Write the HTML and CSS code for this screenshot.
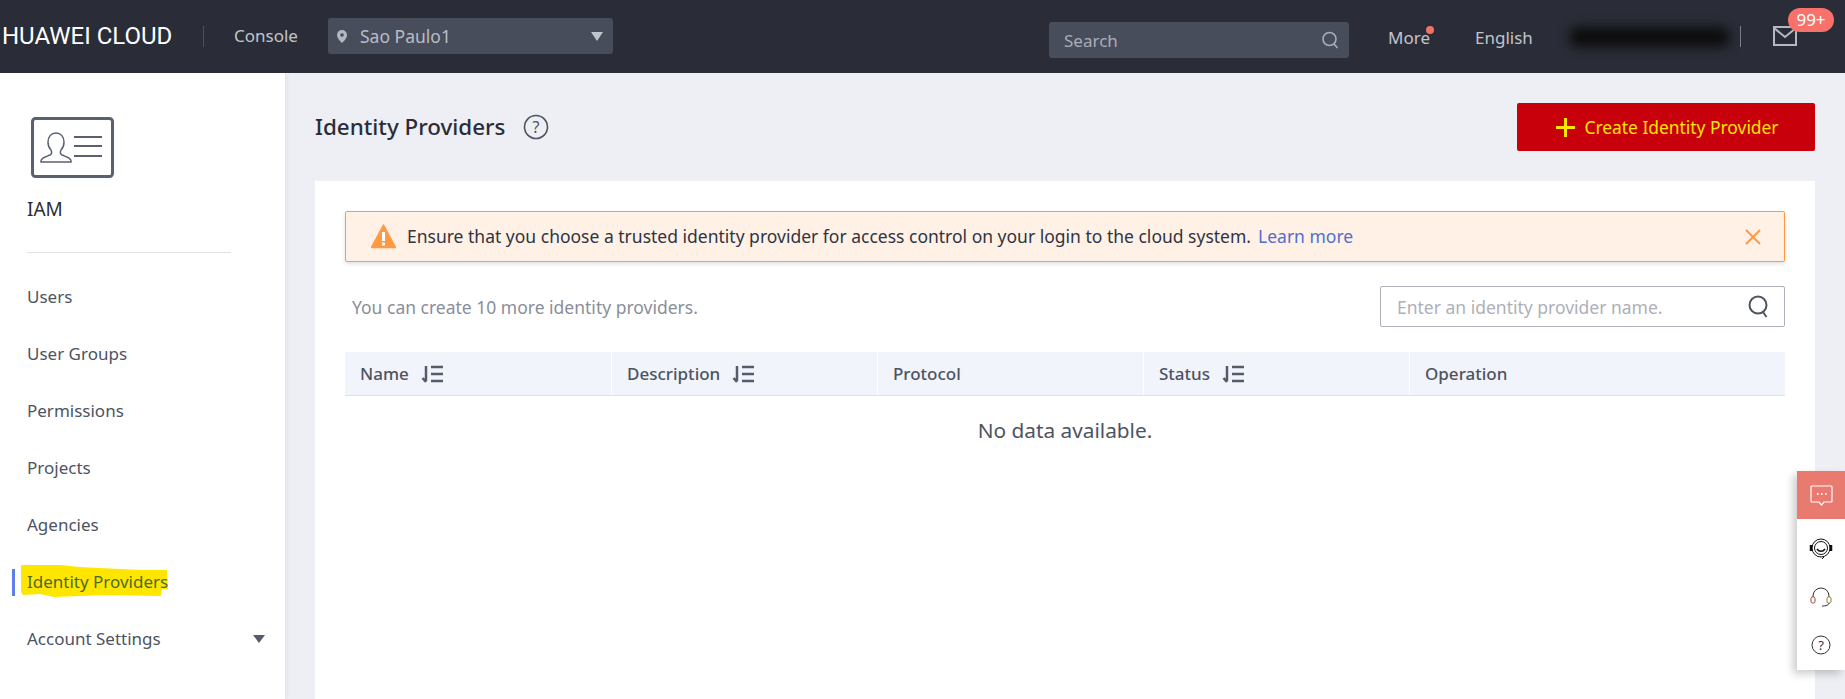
FILE: index.html
```html
<!DOCTYPE html>
<html>
    <head lang="en">
        <meta charset="UTF-8">
        <title>Identity Providers</title>
        <link rel="stylesheet" href="styles.css">
    </head>
    <body>
        <div class="header">
            <span class="logo">HUAWEI CLOUD</span>
            <span class="logo-line"></span>
            <span class="console">Console</span>
            <div class="region">
                <svg class="pin" width="10" height="13" viewBox="0 0 10 13"><path d="M5 0a5 5 0 0 1 5 5c0 3-3 6-5 8-2-2-5-5-5-8a5 5 0 0 1 5-5z" fill="#b4b8c2"/><circle cx="5" cy="5" r="1.8" fill="#484d5b"/></svg>
                <span class="region-name">Sao Paulo1</span>
                <span class="region-arrow"></span>
            </div>
            <div class="search">
                <span>Search</span>
                <svg width="18" height="18" viewBox="0 0 18 18" fill="none" stroke="#a9adb7" stroke-width="1.6"><circle cx="8.5" cy="8" r="6.5"/><path d="M13 13l3.5 4"/></svg>
            </div>
            <span class="nav-item nav-more">More<i class="dot"></i></span>
            <span class="nav-item nav-lang">English</span>
            <div class="scribble"></div>
            <span class="nav-line"></span>
            <div class="mail">
                <svg width="24" height="20" viewBox="0 0 24 20" fill="none" stroke="#b4b8c2" stroke-width="2"><rect x="1" y="1" width="22" height="18"/><path d="M1 2l11 9 11-9"/></svg>
                <span class="badge">99+</span>
            </div>
        </div>
        <div class="page">
            <div class="sidebar">
                <svg class="iam-icon" width="83" height="61" viewBox="0 0 83 61" fill="none" stroke="#5b6070">
                    <rect x="1.5" y="1.5" width="80" height="58" rx="3" stroke-width="3"/>
                    <path d="M10 44c0-3 4-4 9-6 2-1 2-3 1-5-2-2-3-5-3-8 0-5 3-9 8-9s8 4 8 9c0 3-1 6-3 8-1 2-1 4 1 5 5 2 9 3 9 6v1H10z" stroke-width="1.5"/>
                    <path d="M43 20h28M43 29h28M43 39h28" stroke-width="2"/>
                </svg>
                <div class="iam-title">IAM</div>
                <div class="side-line"></div>
                <ul class="menu">
                    <li>Users</li>
                    <li>User Groups</li>
                    <li>Permissions</li>
                    <li>Projects</li>
                    <li>Agencies</li>
                    <li class="selected">
                        <svg class="marker" width="156" height="34" viewBox="0 0 156 34"><path d="M2 1l40 0 18 2 62 3 26 0 1 19-6 0-1 7-55-1-52 2-14-3-17 1-2-3z" fill="#ffe600"/></svg>
                        <span>Identity Providers</span>
                    </li>
                    <li class="has-sub">Account Settings<span class="sub-arrow"></span></li>
                </ul>
            </div>
            <div class="main">
                <div class="title-row">
                    <h1>Identity Providers</h1>
                    <svg class="help" width="26" height="26" viewBox="0 0 26 26"><circle cx="13" cy="13" r="11.5" fill="none" stroke="#4e5362" stroke-width="1.6"/><text x="13" y="18.5" text-anchor="middle" class="help-mark">?</text></svg>
                    <button class="create"><span class="plus"></span>Create Identity Provider</button>
                </div>
                <div class="card">
                    <div class="alert">
                        <svg class="warn" width="25" height="25" viewBox="0 0 25 25"><path d="M12.5 1L24.500 23.500H.5z" fill="#ff9a42" stroke="#ff9a42" stroke-width="1.500" stroke-linejoin="round"/><rect x="11" y="8" width="3" height="9" fill="#fff"/><rect x="11" y="18.500" width="3" height="3" fill="#fff"/></svg>
                        <span class="alert-text">Ensure that you choose a trusted identity provider for access control on your login to the cloud system.<a class="learn">Learn more</a></span>
                        <svg class="close" width="16" height="16" viewBox="0 0 16 16" stroke="#ff9a42" stroke-width="2"><path d="M1 1l14 14M15 1L1 15"/></svg>
                    </div>
                    <div class="tools">
                        <span class="quota">You can create 10 more identity providers.</span>
                        <div class="filter">
                            <span>Enter an identity provider name.</span>
                            <svg width="23" height="23" viewBox="0 0 23 23" fill="none" stroke="#4e5362" stroke-width="2"><circle cx="11" cy="10" r="8.500"/><path d="M16 17l3.500 5"/></svg>
                        </div>
                    </div>
                    <div class="thead">
                        <div class="th">Name<svg class="sort" width="23" height="18" viewBox="0 0 23 18" fill="none" stroke="#565b6b" stroke-width="2.500"><path d="M5 1v15M1.500 13L5 17M10 2h12M10 9h12M10 16h12"/></svg></div>
                        <div class="th">Description<svg class="sort" width="23" height="18" viewBox="0 0 23 18" fill="none" stroke="#565b6b" stroke-width="2.500"><path d="M5 1v15M1.500 13L5 17M10 2h12M10 9h12M10 16h12"/></svg></div>
                        <div class="th">Protocol</div>
                        <div class="th">Status<svg class="sort" width="23" height="18" viewBox="0 0 23 18" fill="none" stroke="#565b6b" stroke-width="2.500"><path d="M5 1v15M1.500 13L5 17M10 2h12M10 9h12M10 16h12"/></svg></div>
                        <div class="th">Operation</div>
                    </div>
                    <div class="empty">No data available.</div>
                </div>
            </div>
        </div>
        <div class="float-bar">
            <div class="float-top">
                <svg width="23" height="21" viewBox="0 0 23 21" fill="none" stroke="#fff" stroke-width="1.200"><path d="M2 1h19a1 1 0 0 1 1 1v14a1 1 0 0 1-1 1h-7l-2.500 3L9 17H2a1 1 0 0 1-1-1V2a1 1 0 0 1 1-1z"/><path d="M7 9h1.500M11 9h1.500M15 9h1.500" stroke-width="1.800"/></svg>
            </div>
            <div class="float-item">
                <svg width="26" height="22" viewBox="0 0 26 22" fill="none" stroke="#111" stroke-width="1"><circle cx="13" cy="10" r="9"/><circle cx="13" cy="10" r="6.500"/><path d="M9 11c2 3 6 3 8 0" stroke-width="1.600"/><path d="M3 7v6M23 7v6" stroke-width="2.500"/><path d="M16 19l-2 2"/></svg>
            </div>
            <div class="float-item">
                <svg width="22" height="21" viewBox="0 0 22 21" fill="none" stroke-width="1"><path d="M3 10V9a8 8 0 0 1 16 0v1" stroke="#333"/><rect x="1" y="10" width="4" height="6" rx="1.500" stroke="#a04030"/><rect x="17" y="10" width="4" height="6" rx="1.500" stroke="#8a7a30"/><path d="M19 16c0 2-3 3-7 3" stroke="#333"/></svg>
            </div>
            <div class="float-item">
                <svg width="20" height="20" viewBox="0 0 20 20"><circle cx="10" cy="10" r="9" fill="none" stroke="#333" stroke-width="1"/><text x="10" y="14.500" text-anchor="middle" class="float-mark">?</text></svg>
            </div>
        </div>
    </body>
</html>
```
FILE: styles.css
```css
*{
    margin:0;
    padding:0;
    box-sizing:border-box;
}
ul,ol{
    list-style:none;
}
html,body{
    height:699px;
    overflow:hidden;
}
body{
    font-family:"Noto Sans",sans-serif;
    font-size:17.5px;
    color:#4e5362;
    background-color:#eeeff4;
}

/* header */
.header{
    height:73px;
    background-color:#2a2d37;
    display:flex;
    align-items:center;
    color:#c1c4cc;
}
.logo{
    font-family:Roboto,sans-serif;
    font-size:24px;
    color:#fff;
    margin-left:2px;
    width:168px;
    white-space:nowrap;
    margin-top:-2px;
}
.logo-line{
    width:1px;
    height:21px;
    background-color:#4c505c;
    margin-left:33px;
}
.console{
    margin-left:30px;
    font-size:17px;
    width:94px;
    margin-top:-2px;
}
.region{
    width:285px;
    height:36px;
    margin-top:-1px;
    background-color:#484d5b;
    border-radius:3px;
    display:flex;
    align-items:center;
    padding:0 10px 0 9px;
}
.region-name{
    margin-left:13px;
    flex:1;
    color:#b9bcc5;
}
.region-arrow{
    border-left:6px solid transparent;
    border-right:6px solid transparent;
    border-top:9px solid #c1c4cc;
}
.search{
    margin-left:436px;
    width:300px;
    height:36px;
    background-color:#484d5b;
    border-radius:3px;
    display:flex;
    align-items:center;
    justify-content:space-between;
    padding:0 10px 0 15px;
    color:#a9adb7;
    font-size:17px;
    margin-top:7px;
}
.nav-item{
    position:relative;
    font-size:17px;
    width:42px;
    margin-top:1px;
}
.nav-more{
    margin-left:39px;
}
.nav-lang{
    margin-left:45px;
    width:58px;
}
.dot{
    position:absolute;
    right:-4px;
    top:0;
    width:8px;
    height:8px;
    border-radius:50%;
    background-color:#f0736a;
}
.scribble{
    margin-left:36px;
    width:161px;
    height:20px;
    background-color:#0c0c0c;
    border-radius:12px;
    filter:blur(6px);
}
.nav-line{
    width:1px;
    height:21px;
    background-color:#7b7f8a;
    margin-left:10px;
}
.mail{
    margin-left:32px;
    position:relative;
    height:20px;
    margin-top:-2px;
}
.badge{
    position:absolute;
    left:15px;
    top:-18px;
    width:46px;
    height:24px;
    border-radius:12px;
    background-color:#f8716b;
    color:#fff;
    text-align:center;
    line-height:24px;
    font-size:17px;
}

/* sidebar */
.page{
    display:flex;
    height:626px;
}
.sidebar{
    width:285px;
    background-color:#fff;
    padding:44px 0 0 27px;
    box-shadow:2px 0 4px rgba(0,0,0,0.05);
}
.iam-icon{
    display:block;
    margin-left:4px;
}
.iam-title{
    font-size:19px;
    color:#2a2d37;
    margin-top:17px;
    line-height:28px;
}
.side-line{
    width:204px;
    height:1px;
    background-color:#dfe1e6;
    margin-top:29px;
}
.menu{
    margin-top:15px;
}
.menu li{
    height:57px;
    line-height:57px;
    font-size:17px;
    position:relative;
    padding-right:20px;
}
.selected span{
    position:relative;
    color:#4e6a2a;
}
.selected::before{
    content:"";
    position:absolute;
    left:-15px;
    top:16px;
    width:3px;
    height:27px;
    background-color:#5f7ee8;
}
.marker{
    position:absolute;
    left:-8px;
    top:11px;
}
.sub-arrow{
    position:absolute;
    right:20px;
    top:25px;
    border-left:6px solid transparent;
    border-right:6px solid transparent;
    border-top:8px solid #565b6b;
}

/* main */
.main{
    flex:1;
    padding:0 30px 0 30px;
}
.title-row{
    height:108px;
    display:flex;
    align-items:center;
}
h1{
    font-size:22.4px;
    font-weight:500;
    color:#2a2d37;
    margin-top:-1px;
}
.help{
    margin-left:18px;
}
.help-mark{
    font-family:"Noto Sans",sans-serif;
    font-size:16px;
    fill:#4e5362;
}
.create{
    margin-left:auto;
    width:298px;
    height:48px;
    padding-left:3px;
    background-color:#c7000b;
    color:#ffe600;
    border:none;
    border-radius:2px;
    font-family:"Noto Sans",sans-serif;
    font-size:17.4px;
    display:flex;
    align-items:center;
    justify-content:center;
}
.plus{
    width:19px;
    height:19px;
    margin-right:9px;
    background:
        linear-gradient(#ffe600,#ffe600) center/100% 3px no-repeat,
        linear-gradient(#ffe600,#ffe600) center/3px 100% no-repeat;
}
.card{
    background-color:#fff;
    height:518px;
    padding:30px 30px 0 30px;
}
.alert{
    height:51px;
    background-color:#fff1e6;
    border:1px solid #ff9a42;
    border-radius:2px;
    box-shadow:0 2px 4px rgba(0,0,0,0.12);
    display:flex;
    align-items:center;
    padding:0 23px 0 25px;
}
.alert-text{
    margin-left:11px;
    margin-top:-1px;
    flex:1;
    color:#2f3442;
    white-space:nowrap;
}
.learn{
    color:#526ecc;
    margin-left:7px;
}
.tools{
    margin-top:24px;
    display:flex;
    align-items:center;
    justify-content:space-between;
    padding-left:7px;
}
.quota{
    color:#8a8e99;
}
.filter{
    width:405px;
    height:41px;
    border:1px solid #adb0b8;
    border-radius:2px;
    display:flex;
    align-items:center;
    justify-content:space-between;
    padding:0 14px 0 16px;
    color:#adb0b8;
}
.thead{
    margin-top:25px;
    display:grid;
    grid-template-columns:266px 266px 266px 266px 1fr;
    height:44px;
    background-color:#f1f4fb;
    border-bottom:1px solid #dfe1e6;
}
.th{
    display:flex;
    align-items:center;
    padding-left:15px;
    font-size:17px;
    font-weight:500;
    border-left:1px solid #fff;
}
.th:first-child{
    border-left:none;
}
.sort{
    margin-left:12px;
}
.empty{
    margin-top:17px;
    text-align:center;
    font-size:20.8px;
    line-height:34px;
}

/* right tools */
.float-bar{
    position:absolute;
    right:0;
    top:471px;
    width:48px;
    height:199px;
    background-color:#fff;
    box-shadow:-4px 4px 8px rgba(0,0,0,0.2);
}
.float-top{
    height:48px;
    background-color:#e87a70;
    display:flex;
    align-items:center;
    justify-content:center;
}
.float-item{
    height:48px;
    display:flex;
    align-items:center;
    justify-content:center;
    margin-top:6px;
}
.float-item + .float-item{
    margin-top:0;
}
.float-mark{
    font-family:"Noto Sans",sans-serif;
    font-size:13px;
    fill:#333;
}
```
